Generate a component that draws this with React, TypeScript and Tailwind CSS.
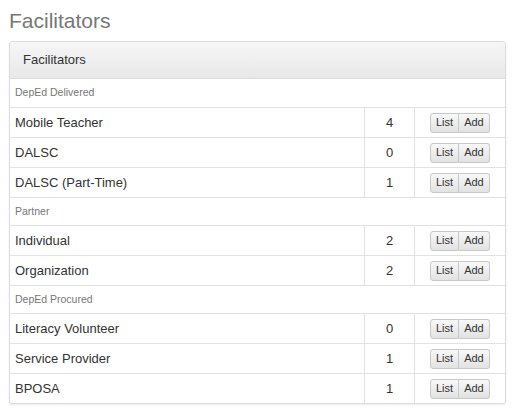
import React from "react";

type Row = { type: "section"; label: string } | { type: "item"; name: string; count: number };

const rows: Row[] = [
  { type: "section", label: "DepEd Delivered" },
  { type: "item", name: "Mobile Teacher", count: 4 },
  { type: "item", name: "DALSC", count: 0 },
  { type: "item", name: "DALSC (Part-Time)", count: 1 },
  { type: "section", label: "Partner" },
  { type: "item", name: "Individual", count: 2 },
  { type: "item", name: "Organization", count: 2 },
  { type: "section", label: "DepEd Procured" },
  { type: "item", name: "Literacy Volunteer", count: 0 },
  { type: "item", name: "Service Provider", count: 1 },
  { type: "item", name: "BPOSA", count: 1 },
];

function Btns() {
  return (
    <div className="flex h-[20px] text-[11px] text-[#333] leading-none">
      <span className="flex items-center px-[5px] border border-[#c8c8c8] rounded-l-[3px] bg-gradient-to-b from-[#f8f8f8] to-[#e2e2e2]">List</span>
      <span className="flex items-center px-[5px] border border-l-0 border-[#c8c8c8] rounded-r-[3px] bg-gradient-to-b from-[#f8f8f8] to-[#e2e2e2]">Add</span>
    </div>
  );
}

export default function App() {
  return (
    <div className="w-[520px] h-[413px] bg-white" style={{ fontFamily: '"Liberation Sans", Arial, sans-serif' }}>
      <div className="h-[41px] pl-[9px] pt-[7px] text-[21px] text-[#777] leading-[28px]">Facilitators</div>
      <div className="ml-[9px] w-[497px] border border-[#dcdcdc] rounded-[3px] shadow-[0_1px_2px_rgba(0,0,0,0.08)] overflow-hidden">
        <div className="h-[37px] flex items-center pl-[13px] text-[13px] text-[#333] bg-gradient-to-b from-[#f6f6f6] to-[#e8e8e8] border-b border-[#dcdcdc]">
          Facilitators
        </div>
        {rows.map((r, i) =>
          r.type === "section" ? (
            <div key={i} className={`h-[28px] flex items-center pl-[5px] text-[10.5px] text-[#777] ${i > 0 ? "border-t border-[#e2e2e2]" : ""}`}>
              {r.label}
            </div>
          ) : (
            <div key={i} className="h-[30px] flex border-t border-[#e2e2e2] text-[13px] text-[#333]">
              <div className="w-[355px] flex items-center pl-[5px] border-r border-[#e2e2e2]">{r.name}</div>
              <div className="w-[50px] flex items-center justify-center border-r border-[#e2e2e2]">{r.count}</div>
              <div className="flex-1 flex items-center pl-[15px]">
                <Btns />
              </div>
            </div>
          )
        )}
      </div>
    </div>
  );
}
